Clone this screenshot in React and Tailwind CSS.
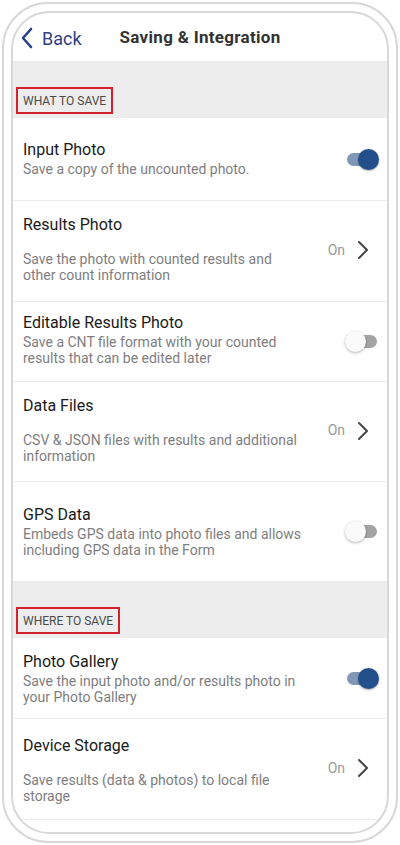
import React from "react";

const font = { fontFamily: "Roboto, 'Noto Sans', sans-serif" };

function Toggle({ on }) {
  if (on) {
    return (
      <div className="relative w-[34px] h-[22px] flex items-center">
        <div className="absolute left-[2px] w-[26px] h-[13px] rounded-full bg-[#8197b6]" />
        <div className="absolute right-[0px] w-[21px] h-[21px] rounded-full bg-[#23508a] shadow-[0_1px_2px_rgba(0,0,0,0.35)]" />
      </div>
    );
  }
  return (
    <div className="relative w-[34px] h-[22px] flex items-center">
      <div className="absolute right-[2px] w-[24px] h-[13px] rounded-full bg-[#a3a3a3]" />
      <div className="absolute left-[0px] w-[21px] h-[21px] rounded-full bg-[#fafafa] shadow-[0_1px_3px_rgba(0,0,0,0.3)]" />
    </div>
  );
}

function OnChevron() {
  return (
    <div className="flex items-center gap-[12px]">
      <span className="text-[14px] text-[#9a9a9a]">On</span>
      <svg width="12" height="20" viewBox="0 0 12 20" fill="none">
        <path d="M2 2 L10 10 L2 18" stroke="#444" strokeWidth="2" strokeLinecap="round" strokeLinejoin="round" />
      </svg>
    </div>
  );
}

function ToggleRow({ title, lines, on, h, pb = "pb-[2px]" }) {
  return (
    <div className={`flex items-center pl-[10px] pr-[8px] border-b border-[#ececec] ${h}`}>
      <div className={`flex-1 flex flex-col ${pb}`}>
        <div className="text-[16px] leading-[20px] text-[#1a1a1a]">{title}</div>
        <div className="mt-[1px] text-[14px] leading-[16px] text-[#7e7e7e]">
          {lines.map((l, i) => (
            <div key={i}>{l}</div>
          ))}
        </div>
      </div>
      <Toggle on={on} />
    </div>
  );
}

function NavRow({ title, lines, h, pad }) {
  return (
    <div className={`flex items-center pl-[10px] pr-[18px] border-b border-[#ececec] ${h}`}>
      <div className={`flex-1 flex flex-col ${pad}`}>
        <div className="text-[16px] leading-[20px] text-[#1a1a1a]">{title}</div>
        <div className="mt-[16px] text-[14px] leading-[16px] text-[#7e7e7e]">
          {lines.map((l, i) => (
            <div key={i}>{l}</div>
          ))}
        </div>
      </div>
      <div className="-mt-[2px] ml-[2px]">
        <OnChevron />
      </div>
    </div>
  );
}

function Section({ label }) {
  return (
    <div className="h-[57px] bg-[#ededed] flex items-end pl-[3px] pb-[4px]">
      <div className="border-2 border-[#d4202c] h-[27px] px-[5px] flex items-center text-[12px] text-[#4a4a4a]">
        {label}
      </div>
    </div>
  );
}

export default function App() {
  return (
    <div className="w-[400px] h-[845px] bg-white p-[2px]" style={font}>
      <div className="w-full h-full rounded-[46px] border-2 border-[#d8d8d8] p-[7px]">
        <div className="w-full h-full rounded-[38px] border-2 border-[#d8d8d8] overflow-hidden flex flex-col bg-white">
          <div className="h-[48px] shrink-0 flex items-center pl-[7px] pt-[2px]">
            <svg width="14" height="22" viewBox="0 0 14 22" fill="none">
              <path d="M11 2 L3 11 L11 20" stroke="#2b3f8f" strokeWidth="2.6" strokeLinecap="round" strokeLinejoin="round" />
            </svg>
            <span className="ml-[8px] text-[18px] text-[#2f3f80]">Back</span>
            <span className="ml-[38px] text-[17px] font-bold text-[#333] tracking-[0.3px]">Saving &amp; Integration</span>
          </div>
          <Section label="WHAT TO SAVE" />
          <ToggleRow title="Input Photo" lines={["Save a copy of the uncounted photo."]} on h="h-[83px]" />
          <NavRow
            title="Results Photo"
            lines={["Save the photo with counted results and", "other count information"]}
            h="h-[101px]"
            pad="pb-[4px]"
          />
          <ToggleRow
            title="Editable Results Photo"
            lines={["Save a CNT file format with your counted", "results that can be edited later"]}
            on={false}
            h="h-[80px]"
            pb="pb-[4px]"
          />
          <NavRow
            title="Data Files"
            lines={["CSV & JSON files with results and additional", "information"]}
            h="h-[100px]"
            pad="pb-[3px]"
          />
          <div className="flex items-center pl-[10px] pr-[8px] h-[99px]">
            <div className="flex-1 flex flex-col">
              <div className="text-[16px] leading-[20px] text-[#1a1a1a]">GPS Data</div>
              <div className="mt-[1px] text-[14px] leading-[16px] text-[#7e7e7e]">
                <div>Embeds GPS data into photo files and allows</div>
                <div>including GPS data in the Form</div>
              </div>
            </div>
            <Toggle on={false} />
          </div>
          <Section label="WHERE TO SAVE" />
          <ToggleRow
            title="Photo Gallery"
            lines={["Save the input photo and/or results photo in", "your Photo Gallery"]}
            on
            h="h-[81px]"
            pb="pb-[0px]"
          />
          <NavRow
            title="Device Storage"
            lines={["Save results (data & photos) to local file", "storage"]}
            h="h-[101px]"
            pad="pt-[2px]"
          />
        </div>
      </div>
    </div>
  );
}
